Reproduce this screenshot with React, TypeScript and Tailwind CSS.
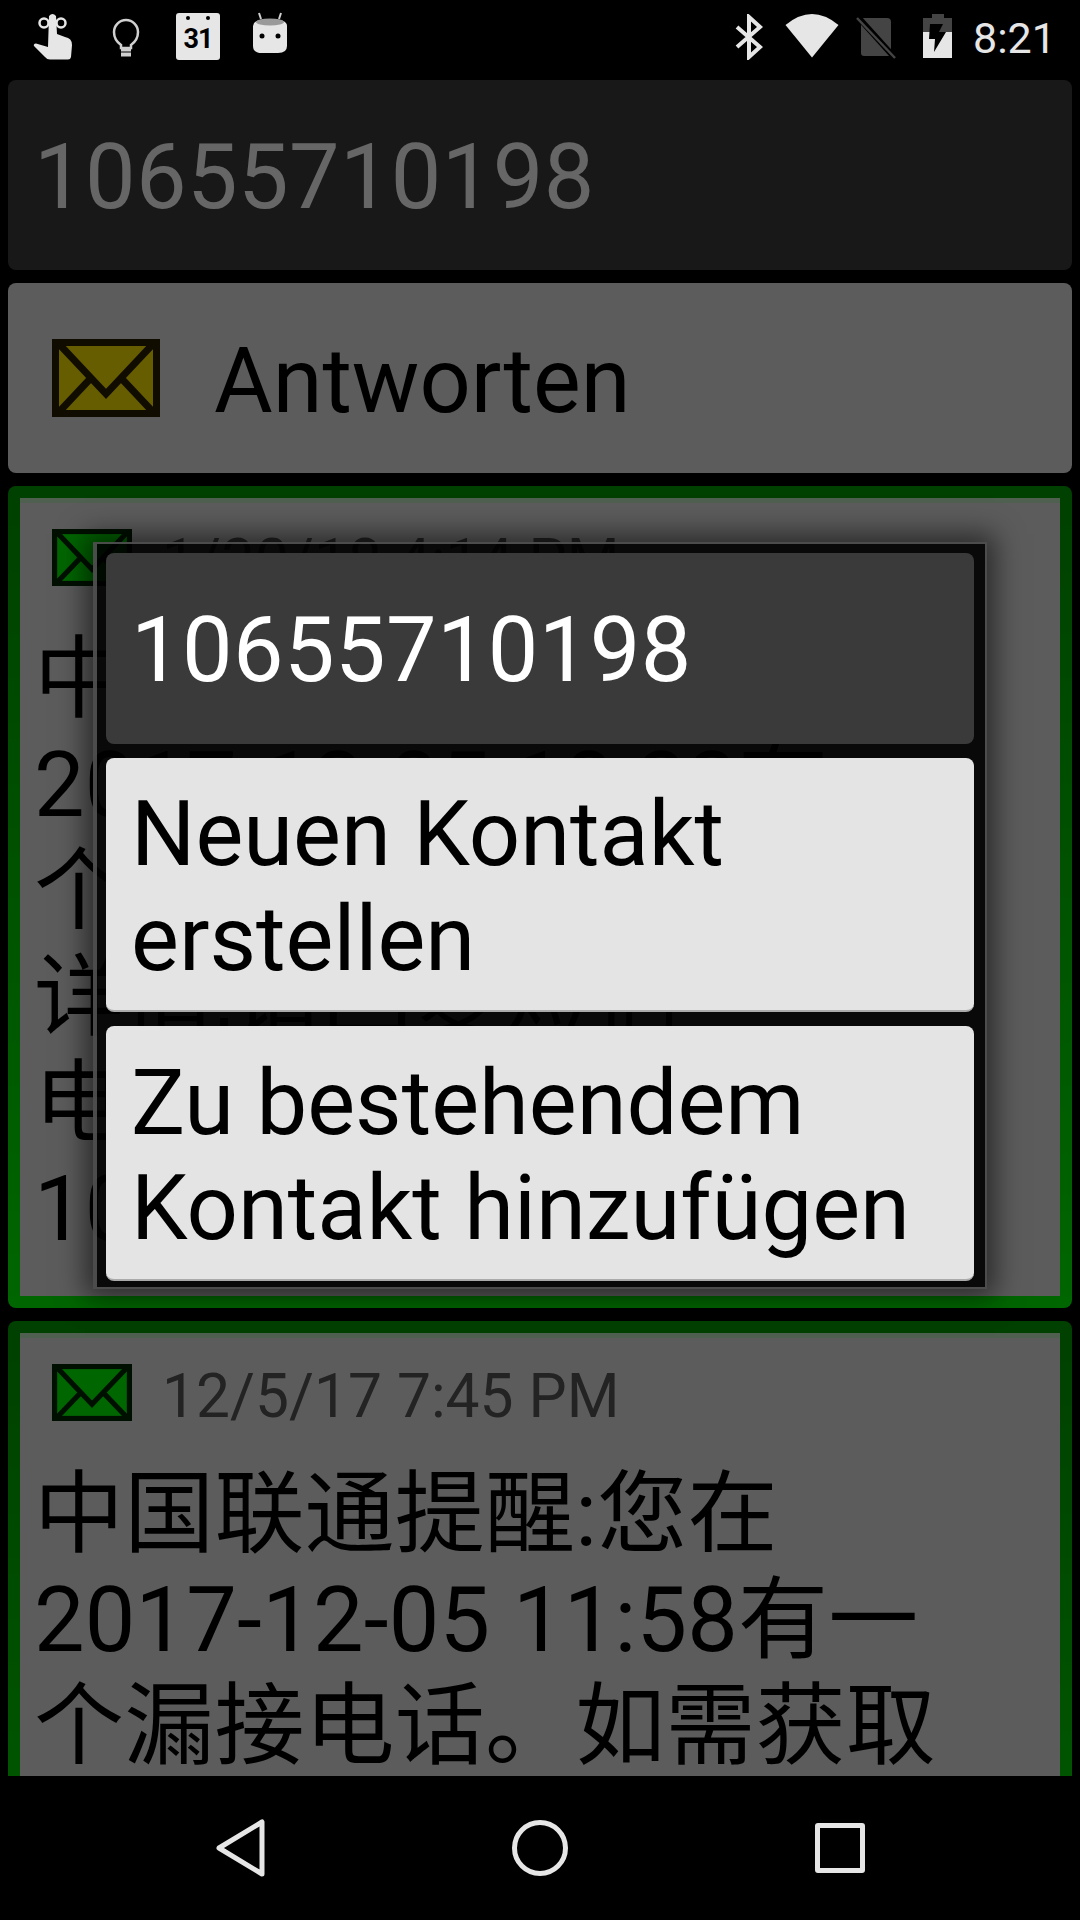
const cjk = '[font-family:Roboto,"Noto_Sans_CJK_SC",sans-serif]';

function Envelope({ fill, edge, w, h }: { fill: string; edge: string; w: number; h: number }) {
  return (
    <svg width={w} height={h} viewBox="0 0 108 78" preserveAspectRatio="none" className="shrink-0">
      <rect width="108" height="78" fill={edge} />
      <rect x="7" y="7" width="94" height="64" fill={fill} />
      <path d="M7 5 L54 55 L101 5 M7 73 L38 40 M101 73 L70 40" fill="none" stroke={edge} strokeWidth="7" />
    </svg>
  );
}

function StatusIcons() {
  return (
    <div className="h-20 shrink-0 bg-black flex items-start relative">
      {/* left notification icons */}
      <svg width="44" height="50" viewBox="0 0 44 50" className="absolute left-[32px] top-[12px]" fill="#e6e6e6">
        <circle cx="12" cy="11" r="4.5" fill="none" stroke="#e6e6e6" strokeWidth="2.5" />
        <circle cx="29" cy="11" r="4.5" fill="none" stroke="#e6e6e6" strokeWidth="2.5" />
        <path d="M17 4 Q20.500 0 24 4 L25 22 L33 25 Q40 26 40 33 L39 45 Q38.500 47.500 36 47.500 L18 47.500 Q15 47.500 13 45 L2 34 Q1 32 4 31.500 L16 35 Z" />
      </svg>
      <svg width="28" height="40" viewBox="0 0 28 40" className="absolute left-[112px] top-[18px]">
        <path d="M9 27 Q2 22 2 14 A12 12 0 0 1 26 14 Q26 22 19 27 L19 30 L9 30 Z" fill="none" stroke="#d0d0d0" strokeWidth="2.500" />
        <rect x="9" y="31" width="10" height="2.500" fill="#d0d0d0" />
        <rect x="9" y="34.500" width="10" height="4" fill="#d0d0d0" />
      </svg>
      <div className="absolute left-[176px] top-[13px] w-[44px] h-[47px] bg-[#e6e6e6] rounded-[3px] flex items-end justify-center pb-[8px]">
        <span className="absolute left-[10px] top-[3px] w-[4px] h-[4px] rounded-full bg-black" />
        <span className="absolute right-[10px] top-[3px] w-[4px] h-[4px] rounded-full bg-black" />
        <span className="font-['Roboto',sans-serif] font-bold text-[27px] leading-[26px] text-black tracking-[-1px]">31</span>
      </div>
      <svg width="36" height="42" viewBox="0 0 36 42" className="absolute left-[252px] top-[12px]">
        <path d="M9 7 L7 1 M27 7 L29 1" stroke="#cfcfcf" strokeWidth="2" />
        <path d="M1 14 Q1 7 18 7 Q35 7 35 14 L35 34 Q35 41 26 41 L10 41 Q1 41 1 34 Z" fill="#e6e6e6" />
        <ellipse cx="18" cy="10" rx="14" ry="3.500" fill="#9a9a9a" />
        <circle cx="10" cy="24" r="2.500" fill="#000" />
        <circle cx="26" cy="24" r="2.500" fill="#000" />
      </svg>

      {/* right system icons */}
      <svg width="28" height="46" viewBox="0 0 28 46" className="absolute left-[735px] top-[14px]">
        <path d="M2 13 L25 33 L14 43 L14 3 L25 13 L2 33" fill="none" stroke="#e6e6e6" strokeWidth="4" />
      </svg>
      <svg width="54" height="44" viewBox="0 0 54 44" className="absolute left-[785px] top-[14px]">
        <path d="M0.500 11 Q27 -11 53.500 11 L27 43.500 Z" fill="#e6e6e6" />
      </svg>
      <svg width="42" height="44" viewBox="0 0 42 44" className="absolute left-[856px] top-[15px]">
        <path d="M5 3 L31 3 Q35 3 35 7 L35 41 L8 41 Q5 41 5 38 Z" fill="#444" />
        <path d="M1 1 L38 42" stroke="#000" strokeWidth="6" />
        <path d="M1 3 L39 43" stroke="#444" strokeWidth="2.500" />
      </svg>
      <svg width="30" height="44" viewBox="0 0 30 44" className="absolute left-[923px] top-[14px]">
        <path d="M9 0 L21 0 L21 4 L29 4 L29 44 L0 44 L0 4 L9 4 Z" fill="#444" />
        <rect x="0" y="18" width="29" height="26" fill="#e6e6e6" />
        <path d="M20 10 L7 10 L6 25 L12 25 L11 38 L23 18 L16 18 Z" fill="#000" />
      </svg>
      <span className="absolute left-[973px] top-[14px] font-['Roboto',sans-serif] text-[43px] leading-[48px] text-[#e6e6e6]">8:21</span>
    </div>
  );
}

function MessageCard({ date, lines }: { date: string; lines: string[] }) {
  return (
    <div className="shrink-0 h-[822px] rounded-lg bg-gradient-to-b from-[#00a000] to-[#00ff00] p-3">
      <div className="h-full bg-[#e6e6e6] border-t-[5px] border-[#c8f0c8] pl-[14px]">
        <div className="flex items-center pl-[18px] pt-[26px] h-[83px]">
          <Envelope fill="#00ff00" edge="#002800" w={80} h={57} />
          <span className="ml-[30px] pt-[8px] font-['Roboto',sans-serif] text-[60.500px] leading-[60px] text-[#585858]">{date}</span>
        </div>
        <div className="mt-[41px]">
          {lines.map((line) => (
            <p key={line} className={`${cjk} text-[90px] leading-[106px] tracking-[0.2px] text-black whitespace-nowrap`}>{line}</p>
          ))}
        </div>
      </div>
    </div>
  );
}

export default function App() {
  return (
    <div className="w-[1080px] h-[1920px] bg-black flex flex-col overflow-hidden font-['Roboto',sans-serif]">
      <StatusIcons />

      <div className="relative flex-1 min-h-0 overflow-hidden">
        <div className="h-full flex flex-col gap-[13px] px-2 overflow-hidden">
          <div className="shrink-0 h-[190px] rounded-lg bg-[#3c3c3c] flex items-center pl-[26px] pt-[5px]">
            <span className="text-[90px] leading-[105px] tracking-[0.4px] text-white">10655710198</span>
          </div>
          <div className="shrink-0 h-[190px] rounded-lg bg-[#e6e6e6] flex items-center pl-11 gap-[54px]">
            <Envelope fill="#ffe600" edge="#2a2000" w={108} h={78} />
            <span className="text-[90px] leading-[105px] text-black pt-[6px]">Antworten</span>
          </div>
          <MessageCard
            date="1/30/18 4:14 PM"
            lines={['中国联通提醒:您在', '2017-12-05 10:33有一', '个漏接电话。如需获取', '详情,请回复短信', '电话10655710198', '10655710198']}
          />
          <MessageCard
            date="12/5/17 7:45 PM"
            lines={['中国联通提醒:您在', '2017-12-05 11:58有一', '个漏接电话。如需获取']}
          />
        </div>

        {/* scrim + dialog */}
        <div className="absolute inset-0 bg-black/60" />
        <div className="absolute left-[93px] top-[462px] w-[894px] h-[747px] border-2 border-l-4 border-[#6a6a6a]/70 bg-black/90 shadow-[0_0_26px_8px_rgba(0,0,0,0.55)] pl-[9px] pr-[11px] pt-[9px] flex flex-col gap-[14px]">
          <div className="h-[191px] shrink-0 rounded-lg bg-[#3a3a3a] flex items-center pl-[25px] pt-[3px]">
            <span className="text-[90px] leading-[105px] tracking-[0.4px] text-white">10655710198</span>
          </div>
          <button className="h-[254px] shrink-0 rounded-lg bg-[#e4e4e4] border-b-2 border-[#aaa] text-left pl-[25px] pt-[6px] text-[90.300px] leading-[105px] text-black">
            Neuen Kontakt erstellen
          </button>
          <button className="h-[255px] shrink-0 rounded-lg bg-[#e4e4e4] border-b-2 border-[#aaa] text-left pl-[25px] pt-[6px] text-[90.300px] leading-[105px] text-black">
            Zu bestehendem Kontakt hinzufügen
          </button>
        </div>
      </div>

      {/* nav bar */}
      <div className="h-36 shrink-0 bg-black relative">
        <svg width="50" height="58" viewBox="0 0 50 58" className="absolute left-[216px] top-[43px]">
          <path d="M46 3 L46 55 L3 29 Z" fill="none" stroke="#e6e6e6" strokeWidth="5" strokeLinejoin="round" />
        </svg>
        <div className="absolute left-[512px] top-[44px] w-14 h-14 rounded-full border-[5px] border-[#e6e6e6]" />
        <div className="absolute left-[815px] top-[47px] w-[50px] h-[50px] rounded-[3px] border-[5px] border-[#e6e6e6]" />
      </div>
    </div>
  );
}
